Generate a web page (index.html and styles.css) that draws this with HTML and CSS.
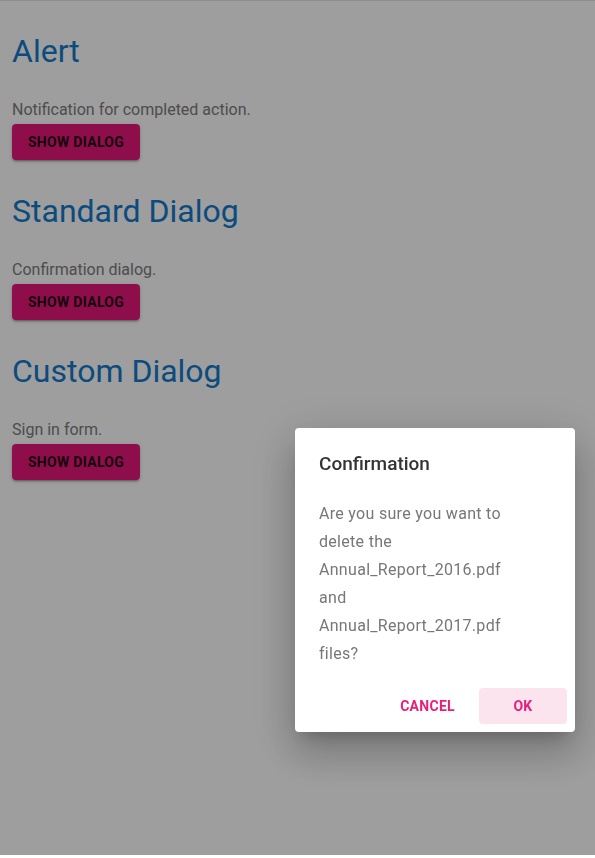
FILE: index.html
```html
<!DOCTYPE html>
<html lang="en">
<head>
  <meta charset="UTF-8" />
  <title>Dialogs</title>
  <link rel="stylesheet" href="styles.css">
</head>
<body>
  <main class="page">
    <!-- alert -->
    <section class="demo">
      <h2 class="demo-title">Alert</h2>
      <p class="demo-text">Notification for completed action.</p>
      <button class="show-button">Show dialog</button>
    </section>

    <!-- standard -->
    <section class="demo">
      <h2 class="demo-title">Standard Dialog</h2>
      <p class="demo-text">Confirmation dialog.</p>
      <button class="show-button">Show dialog</button>
    </section>

    <!-- custom -->
    <section class="demo">
      <h2 class="demo-title">Custom Dialog</h2>
      <p class="demo-text">Sign in form.</p>
      <button class="show-button">Show dialog</button>
    </section>
  </main>

  <div class="scrim"></div>

  <div class="dialog">
    <h3 class="dialog-title">Confirmation</h3>
    <p class="dialog-text">Are you sure you want to delete the Annual_Report_2016.pdf and Annual_Report_2017.pdf files?</p>
    <div class="dialog-actions">
      <button class="text-button">Cancel</button>
      <button class="text-button primary">OK</button>
    </div>
  </div>
</body>
</html>
```

FILE: styles.css
```css
/* base */
html, body {
  margin: 0;
  padding: 0;
  background: #fff;
  font-family: "Roboto", "Noto Sans", sans-serif;
  height: 100%;
  overflow: hidden;
}

.page {
  padding: 0 12px;
}

/* demo blocks */
.demo {
  padding-top: 27px;
}
.demo-title {
  margin: 0 0 23px;
  font-size: 32px;
  line-height: 48px;
  font-weight: 400;
  color: #1379ca;
}
.demo-text {
  margin: 0 0 2px;
  font-size: 16px;
  line-height: 24px;
  color: #7c7c7c;
}
.show-button {
  display: block;
  width: 128px;
  height: 36px;
  padding: 0;
  border: none;
  border-radius: 4px;
  background: #e51879;
  color: rgba(0, 0, 0, 0.87);
  font-family: inherit;
  font-size: 14px;
  font-weight: 700;
  letter-spacing: 0.3px;
  text-transform: uppercase;
  box-shadow: 0 3px 1px -2px rgba(0,0,0,.2), 0 2px 2px 0 rgba(0,0,0,.14), 0 1px 5px 0 rgba(0,0,0,.12);
}

/* overlay */
.scrim {
  position: fixed;
  inset: 0 0 3px 0;
  border-top: 1px solid rgba(0, 0, 0, 0.1);
  background: rgba(0, 0, 0, 0.38);
}

/* dialog */
.dialog {
  position: fixed;
  left: 295px;
  top: 428px;
  width: 280px;
  box-sizing: border-box;
  background: #fff;
  border-radius: 4px;
  box-shadow:
    0 11px 15px -7px rgba(0,0,0,.2),
    0 24px 38px 3px rgba(0,0,0,.14),
    0 9px 46px 8px rgba(0,0,0,.12);
}
.dialog-title {
  margin: 0;
  padding: 20px 24px 0;
  font-size: 19px;
  line-height: 32px;
  font-weight: 500;
  color: #333;
}
.dialog-text {
  margin: 20px 0 12px;
  padding: 0 50px 0 24px;
  font-size: 16px;
  line-height: 28px;
  letter-spacing: 0.3px;
  color: #777;
}
.dialog-actions {
  display: flex;
  justify-content: flex-end;
  gap: 8px;
  padding: 8px;
}
.text-button {
  height: 36px;
  min-width: 64px;
  padding: 0 16px;
  border: none;
  border-radius: 4px;
  background: transparent;
  color: #e91e7a;
  font-family: inherit;
  font-size: 14px;
  font-weight: 700;
  letter-spacing: 0.3px;
  text-transform: uppercase;
}
.text-button.primary {
  width: 88px;
  background: #fce4ee;
}
```
